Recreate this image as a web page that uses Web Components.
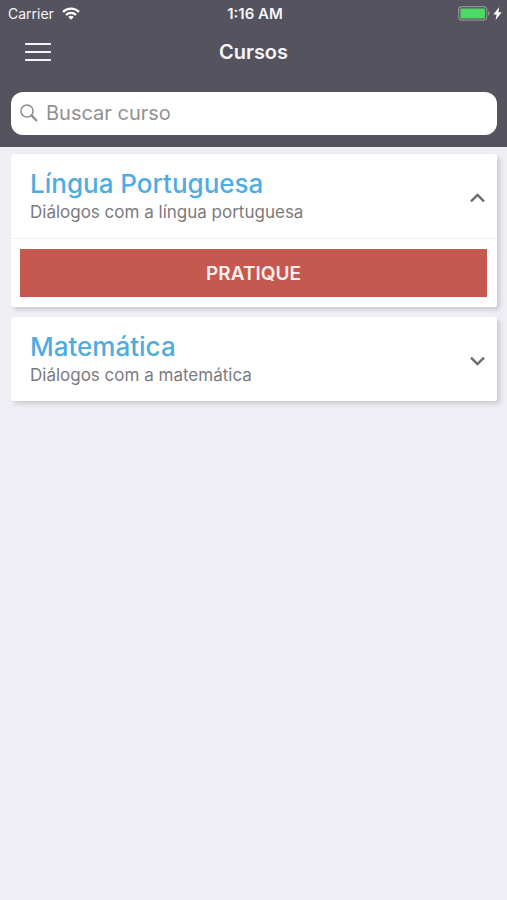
<!DOCTYPE html>
<html lang="pt-BR">
<head>
<meta charset="utf-8">
<meta name="viewport" content="width=device-width, initial-scale=1">
<title>Cursos</title>
<style>
  body{
    margin:0;
    min-height:100vh;
    background:#EFEEF4;
    font-family:Inter, "Liberation Sans", sans-serif;
  }
</style>
</head>
<body>

  <app-header>
    <status-bar slot="status" carrier="Carrier" time="1:16 AM"></status-bar>
    <nav-bar slot="nav">Cursos</nav-bar>
    <search-field slot="search" placeholder="Buscar curso"></search-field>
  </app-header>

  <course-list>

    <course-card open>
      <span slot="title">Língua Portuguesa</span>
      <span slot="description">Diálogos com a língua portuguesa</span>
      <practice-button>PRATIQUE</practice-button>
    </course-card>

    <course-card>
      <span slot="title">Matemática</span>
      <span slot="description">Diálogos com a matemática</span>
      <practice-button>PRATIQUE</practice-button>
    </course-card>

  </course-list>

<script>
class AppHeader extends HTMLElement {

  constructor(){
    super();

    this.attachShadow({ mode:"open" });

    this.shadowRoot.innerHTML = `
      <style>

        :host{
          display:block;
          background:#54535E;
          color:#F6F5FA;
        }

        .search{
          padding:15px 10px 12px 11px;
        }

      </style>

      <header>
        <slot name="status"></slot>
        <slot name="nav"></slot>
        <div class="search">
          <slot name="search"></slot>
        </div>
      </header>
    `;
  }

}

class StatusBar extends HTMLElement {

  constructor(){
    super();

    this.attachShadow({ mode:"open" });

    this.shadowRoot.innerHTML = `
      <style>

        :host{
          display:grid;
          grid-template-columns:1fr auto 1fr;
          align-items:center;

          height:27px;
          padding:0 5px 0 8px;

          font-size:14px;
        }

        .side{
          display:flex;
          align-items:center;
          gap:8px;
        }

        .power{
          justify-content:flex-end;
          gap:3px;
        }

        .time{
          font-size:15px;
          font-weight:600;
        }

        svg{
          display:block;
        }

      </style>

      <div class="side">
        <span class="carrier"></span>
        <svg width="18" height="13" viewBox="0 0 18 13" fill="none" stroke="#FFF" stroke-width="2.3" aria-hidden="true">
          <path d="M1 4.9a11.4 11.4 0 0 1 16 0"/>
          <path d="M4 8a7.1 7.1 0 0 1 10 0"/>
          <path d="M9 12.8 6.2 10a4 4 0 0 1 5.6 0z" fill="#FFF" stroke="none"/>
        </svg>
      </div>

      <span class="time"></span>

      <div class="side power">
        <svg width="32" height="15" viewBox="0 0 32 15" aria-hidden="true">
          <rect x=".7" y=".7" width="28" height="13.4" rx="3.4" fill="none" stroke="#918F99" stroke-width="1.2"/>
          <rect x="2.4" y="2.4" width="24.6" height="10" rx="1" fill="#4CD964"/>
          <path d="M30 5.1c2 .7 2 4 0 4.7z" fill="#918F99"/>
        </svg>
        <svg width="9" height="13" viewBox="0 0 9 13" aria-hidden="true">
          <path d="M6.2 0 .4 7.4h3.2L2.6 13 8.7 5.3H5.4z" fill="#FFF"/>
        </svg>
      </div>
    `;
  }

  connectedCallback(){
    this.shadowRoot.querySelector(".carrier").textContent = this.getAttribute("carrier");
    this.shadowRoot.querySelector(".time").textContent = this.getAttribute("time");
  }

}

class NavBar extends HTMLElement {

  constructor(){
    super();

    this.attachShadow({ mode:"open" });

    this.shadowRoot.innerHTML = `
      <style>

        :host{
          display:grid;
          grid-template-columns:44px 1fr 44px;
          align-items:center;

          height:50px;
          padding:0 16px;
        }

        button{
          display:grid;
          place-items:center;

          width:44px;
          height:44px;
          padding:0;
          border:none;
          background:none;
          cursor:pointer;
        }

        h1{
          margin:0;
          font-size:20px;
          font-weight:600;
          line-height:24px;
          text-align:center;
        }

      </style>

      <button type="button" aria-label="Menu">
        <svg width="26" height="20" viewBox="0 0 26 20" stroke="#F6F5FA" stroke-width="2.2" stroke-linecap="round">
          <path d="M1 2h24M1 10h24M1 18h24"/>
        </svg>
      </button>

      <h1><slot></slot></h1>
    `;
  }

}

class SearchField extends HTMLElement {

  constructor(){
    super();

    this.attachShadow({ mode:"open" });

    this.shadowRoot.innerHTML = `
      <style>

        :host{
          display:block;
        }

        label{
          display:flex;
          align-items:center;
          gap:8px;

          box-sizing:border-box;
          height:43px;
          padding:0 10px 2px 9px;
          border-radius:12px;
          background:#FFF;
        }

        svg{
          flex:none;
        }

        input{
          flex:1;
          min-width:0;
          padding:0;
          border:none;
          outline:none;
          background:none;

          font:inherit;
          font-size:20px;
          color:#333;
        }

        input::placeholder{
          color:#929292;
          opacity:1;
        }

      </style>

      <label>
        <svg width="18" height="18" viewBox="0 0 18 18" fill="none" stroke="#8C8C8C" aria-hidden="true">
          <circle cx="7" cy="7" r="6.1" stroke-width="1.5"/>
          <path d="M11.4 11.4 17 17" stroke-width="2.2"/>
        </svg>
        <input type="search">
      </label>
    `;
  }

  connectedCallback(){
    const input = this.shadowRoot.querySelector("input");

    input.placeholder = this.getAttribute("placeholder");
    input.setAttribute("aria-label", this.getAttribute("placeholder"));
  }

}

class CourseList extends HTMLElement {

  constructor(){
    super();

    this.attachShadow({ mode:"open" });

    this.shadowRoot.innerHTML = `
      <style>

        :host{
          display:flex;
          flex-direction:column;
          gap:10px;
          padding:7px 10px 10px 11px;
        }

      </style>

      <slot></slot>
    `;
  }

}

class CourseCard extends HTMLElement {

  constructor(){
    super();

    this.attachShadow({ mode:"open" });

    this.shadowRoot.innerHTML = `
      <style>

        :host{
          display:block;
          border-radius:3px;
          background:#FFF;
          box-shadow:3px 3px 4px rgba(0, 0, 0, .14);
        }

        .head{
          display:flex;
          align-items:center;
          justify-content:space-between;

          width:100%;
          padding:14px 12px 14px 19px;
          border:none;
          background:none;
          cursor:pointer;

          font:inherit;
          text-align:left;
        }

        .text{
          display:flex;
          flex-direction:column;
        }

        .title{
          font-size:26px;
          font-weight:500;
          line-height:32px;
          color:#4FACE0;
        }

        .description{
          font-size:17px;
          line-height:24px;
          color:#7B7B7D;
        }

        .chevron{
          flex:none;
          margin-top:4px;
        }

        :host([open]) .chevron{
          transform:rotate(180deg);
        }

        .body{
          display:none;
          padding:10px 10px 10px 9px;
          border-top:1px solid #F1F1F3;
        }

        :host([open]) .body{
          display:block;
        }

      </style>

      <button class="head" type="button">
        <span class="text">
          <span class="title"><slot name="title"></slot></span>
          <span class="description"><slot name="description"></slot></span>
        </span>
        <svg class="chevron" width="15" height="10" viewBox="0 0 15 10" fill="none" stroke="#6C6C6E" stroke-width="2.4" aria-hidden="true">
          <path d="M1 1.6 7.5 8 14 1.6"/>
        </svg>
      </button>

      <div class="body">
        <slot></slot>
      </div>
    `;
  }

  connectedCallback(){

    const head = this.shadowRoot.querySelector(".head");

    head.setAttribute("aria-expanded", this.hasAttribute("open"));

    head.addEventListener("click", () => {
      this.toggleAttribute("open");
      head.setAttribute("aria-expanded", this.hasAttribute("open"));
    });

  }

}

class PracticeButton extends HTMLElement {

  constructor(){
    super();

    this.attachShadow({ mode:"open" });

    this.shadowRoot.innerHTML = `
      <style>

        :host{
          display:block;
        }

        button{
          display:block;
          width:100%;
          height:48px;
          padding:0;
          border:none;
          background:#C5584F;
          color:#FCF0EE;
          cursor:pointer;

          font:inherit;
          font-size:19px;
          font-weight:600;
        }

      </style>

      <button type="button"><slot></slot></button>
    `;
  }

}

customElements.define("app-header", AppHeader);
customElements.define("status-bar", StatusBar);
customElements.define("nav-bar", NavBar);
customElements.define("search-field", SearchField);
customElements.define("course-list", CourseList);
customElements.define("course-card", CourseCard);
customElements.define("practice-button", PracticeButton);
</script>
</body>
</html>
